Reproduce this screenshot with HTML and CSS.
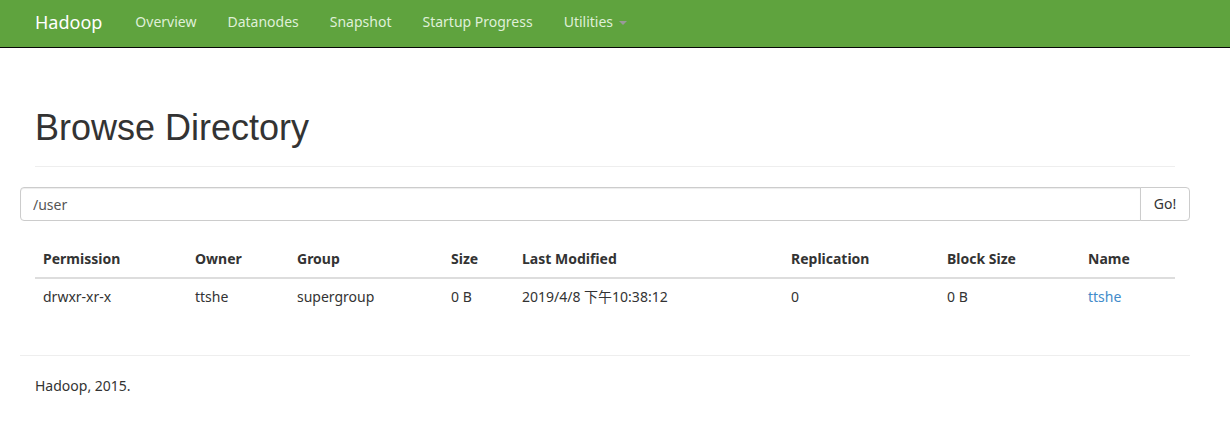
FILE: index.html
```html
<!DOCTYPE html>
<html lang="en">
<head>
<meta charset="utf-8">
<title>Browsing HDFS</title>
<link rel="stylesheet" href="styles.css">
</head>
<body>
<header class="navbar">
  <nav class="container nav">
    <a class="brand" href="#">Hadoop</a>
    <a class="nav-link" href="#">Overview</a>
    <a class="nav-link" href="#">Datanodes</a>
    <a class="nav-link" href="#">Snapshot</a>
    <a class="nav-link" href="#">Startup Progress</a>
    <a class="nav-link" href="#">Utilities<span class="caret"></span></a>
  </nav>
</header>
<main class="page">
  <div class="container">
    <div class="page-header"><h1>Browse Directory</h1></div>
    <form class="path-form">
      <input class="path-input" type="text" value="/user" aria-label="Directory">
      <button class="go" type="button">Go!</button>
    </form>
    <div class="panel">
      <table class="listing">
        <colgroup><col class="c-perm"><col class="c-owner"><col class="c-group"><col class="c-size"><col class="c-mod"><col class="c-rep"><col class="c-block"><col class="c-name"></colgroup>
        <thead>
          <tr><th>Permission</th><th>Owner</th><th>Group</th><th>Size</th><th>Last Modified</th><th>Replication</th><th>Block Size</th><th>Name</th></tr>
        </thead>
        <tbody>
          <tr><td>drwxr-xr-x</td><td>ttshe</td><td>supergroup</td><td>0 B</td><td>2019/4/8 下午10:38:12</td><td>0</td><td>0 B</td><td><a href="#">ttshe</a></td></tr>
        </tbody>
      </table>
    </div>
    <footer class="footer"><p>Hadoop, 2015.</p></footer>
  </div>
</main>
</body>
</html>
```
FILE: styles.css
```css
* { box-sizing: border-box; }
body {
  margin: 0;
  background: #fff;
  color: #333;
  font: 14px/20px "Noto Sans", "Noto Sans CJK SC", sans-serif;
}
a { color: #428bca; text-decoration: none; }
.container { max-width: 1170px; margin: 0 auto; }
.navbar, .page { padding-right: 20px; }
.navbar { background: #5fa33e; border-bottom: 1px solid #080808; }
.nav { display: flex; align-items: center; gap: 1px; height: 47px; padding: 0 15px 4px; }
.nav a { color: #fff; }
.brand { margin-right: 17px; font-size: 18px; }
.nav .nav-link { padding: 0 15px; color: #dff0d8; }
.caret {
  display: inline-block;
  margin-left: 6px;
  vertical-align: middle;
  border: 4px solid transparent;
  border-top-color: #999;
  border-bottom: 0;
}
.page-header { margin: 60px 15px 20px; padding-bottom: 18px; border-bottom: 1px solid #eee; }
h1 {
  margin: 0;
  font: 500 36px/40px "Liberation Sans", Arial, sans-serif;
}
.path-form { display: flex; }
.path-input {
  flex: 1;
  min-width: 0;
  height: 34px;
  padding: 6px 12px;
  border: 1px solid #ccc;
  border-radius: 4px 0 0 4px;
  box-shadow: inset 0 1px 1px rgba(0, 0, 0, .075);
  color: #555;
  font: inherit;
}
.go {
  min-width: 50px;
  margin-left: -1px;
  padding: 6px 12px;
  border: 1px solid #ccc;
  border-radius: 0 4px 4px 0;
  background: #fff;
  color: #333;
  font: inherit;
}
.panel { padding: 20px 15px; }
.listing { width: 100%; border-collapse: collapse; table-layout: fixed; }
.listing th, .listing td { padding: 8px; text-align: left; vertical-align: top; white-space: nowrap; }
.listing th { border-bottom: 2px solid #ddd; font-weight: 700; }
.c-perm { width: 152px; }
.c-owner { width: 102px; }
.c-group { width: 154px; }
.c-size { width: 71px; }
.c-mod { width: 269px; }
.c-rep { width: 156px; }
.c-block { width: 141px; }
.footer { margin-top: 20px; padding: 20px 15px; border-top: 1px solid #eee; }
.footer p { margin: 0; }
```
